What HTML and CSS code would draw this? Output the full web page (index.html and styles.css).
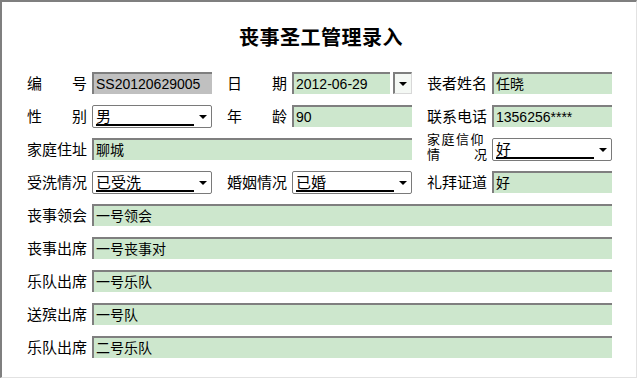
FILE: index.html
```html
<!DOCTYPE html>
<html lang="zh-CN">
<head>
    <meta charset="UTF-8">
    <title>丧事圣工管理录入</title>
    <link rel="stylesheet" href="styles.css">
</head>
<body>

    <div class="window">
        <h1 class="title">丧事圣工管理录入</h1>

        <div class="form">
            <!-- 第一行 -->
            <div class="row">
                <div class="field">
                    <span class="label spread"><i>编</i><i>号</i></span>
                    <div class="box box-gray">SS20120629005</div>
                </div>
                <div class="field">
                    <span class="label spread"><i>日</i><i>期</i></span>
                    <div class="date">
                        <div class="box box-date">2012-06-29</div>
                        <div class="date-btn"><span class="arrow"></span></div>
                    </div>
                </div>
                <div class="field">
                    <span class="label">丧者姓名</span>
                    <div class="box">任晓</div>
                </div>
            </div>

            <!-- 第二行 -->
            <div class="row">
                <div class="field">
                    <span class="label spread"><i>性</i><i>别</i></span>
                    <div class="select"><span class="value">男</span><span class="arrow"></span></div>
                </div>
                <div class="field">
                    <span class="label spread"><i>年</i><i>龄</i></span>
                    <div class="box">90</div>
                </div>
                <div class="field">
                    <span class="label">联系电话</span>
                    <div class="box">1356256****</div>
                </div>
            </div>

            <!-- 第三行 -->
            <div class="row">
                <div class="field">
                    <span class="label">家庭住址</span>
                    <div class="box box-addr">聊城</div>
                </div>
                <div class="field">
                    <span class="label label-two">
                        <span class="line">家庭信仰</span>
                        <span class="line spread"><i>情</i><i>况</i></span>
                    </span>
                    <div class="select"><span class="value">好</span><span class="arrow"></span></div>
                </div>
            </div>

            <!-- 第四行 -->
            <div class="row">
                <div class="field">
                    <span class="label">受洗情况</span>
                    <div class="select"><span class="value">已受洗</span><span class="arrow"></span></div>
                </div>
                <div class="field">
                    <span class="label">婚姻情况</span>
                    <div class="select"><span class="value">已婚</span><span class="arrow"></span></div>
                </div>
                <div class="field">
                    <span class="label">礼拜证道</span>
                    <div class="box">好</div>
                </div>
            </div>

            <!-- 整行字段 -->
            <div class="row">
                <div class="field field-wide">
                    <span class="label">丧事领会</span>
                    <div class="box">一号领会</div>
                </div>
            </div>
            <div class="row">
                <div class="field field-wide">
                    <span class="label">丧事出席</span>
                    <div class="box">一号丧事对</div>
                </div>
            </div>
            <div class="row">
                <div class="field field-wide">
                    <span class="label">乐队出席</span>
                    <div class="box">一号乐队</div>
                </div>
            </div>
            <div class="row">
                <div class="field field-wide">
                    <span class="label">送殡出席</span>
                    <div class="box">一号队</div>
                </div>
            </div>
            <div class="row">
                <div class="field field-wide">
                    <span class="label">乐队出席</span>
                    <div class="box">二号乐队</div>
                </div>
            </div>
        </div>
    </div>

</body>
</html>
```

FILE: styles.css
```css
/* Основные переменные */
:root {
    --box-green: #cde7cd;
    --box-gray: #c0c0c0;
    --edge-dark: #7f7f7f;
    --edge-light: #e2e2e2;
    --text-color: #000000;
}

* {
    margin: 0;
    padding: 0;
    box-sizing: border-box;
}

body {
    background: #ffffff;
    color: var(--text-color);
    font-family: "Liberation Sans", "Noto Sans CJK SC", sans-serif;
}

.window {
    width: 637px;
    height: 378px;
    border-top: 2px solid var(--edge-dark);
    border-left: 2px solid var(--edge-dark);
    border-right: 1px solid var(--edge-light);
    border-bottom: 1px solid var(--edge-light);
    background: #ffffff;
}

.title {
    padding-top: 23px;
    padding-left: 4px;
    font-family: "Noto Sans CJK SC", sans-serif;
    font-size: 20px;
    line-height: 24px;
    font-weight: bold;
    text-align: center;
    letter-spacing: 0.5px;
}

/* Форма */
.form {
    width: 610px;
    margin-top: 23px;
    padding-left: 25px;
    display: flex;
    flex-direction: column;
    gap: 11px;
}

.row {
    display: flex;
    height: 22px;
}

.field {
    display: flex;
    gap: 5px;
    margin-right: 15px;
}

.field-wide {
    flex: 1;
    margin-right: 0;
}

.label {
    width: 60px;
    flex-shrink: 0;
    font-family: "Noto Sans CJK SC", sans-serif;
    font-size: 15px;
    line-height: 22px;
    white-space: nowrap;
}

.spread {
    display: flex;
    justify-content: space-between;
}

.spread i {
    font-style: normal;
}

/* две строки: «家庭信仰 / 情况» */
.label-two {
    display: flex;
    flex-direction: column;
    margin-top: -6px;
    font-family: "Liberation Sans", "Noto Sans CJK SC", sans-serif;
    font-size: 13px;
    letter-spacing: 1.5px;
}

.label-two .line {
    line-height: 15px;
    height: 15px;
}

.label-two .spread {
    letter-spacing: 0;
}

/* Поля */
.box {
    width: 120px;
    height: 22px;
    padding-left: 2px;
    background: var(--box-green);
    border-top: 2px solid var(--edge-dark);
    border-left: 2px solid var(--edge-dark);
    font-size: 14px;
    line-height: 20px;
    white-space: nowrap;
    overflow: hidden;
}

.field-wide .box {
    flex: 1;
}

.box-gray {
    background: var(--box-gray);
}

.box-addr {
    width: 320px;
}

.date {
    display: flex;
    gap: 3px;
}

.box-date {
    width: 98px;
}

.date-btn {
    width: 19px;
    height: 22px;
    border-top: 2px solid var(--edge-dark);
    border-left: 2px solid var(--edge-dark);
    border-right: 1px solid #d8d8d8;
    border-bottom: 1px solid #d8d8d8;
    background: #f4f8f4;
    display: flex;
    align-items: center;
    justify-content: center;
}

/* Выпадающий список */
.select {
    width: 120px;
    height: 23px;
    padding: 0 4px 0 3px;
    border: 1px solid #7a7a7a;
    border-radius: 2px;
    background: #ffffff;
    display: flex;
    align-items: center;
    justify-content: space-between;
}

.select .value {
    width: 98px;
    height: 18px;
    border-bottom: 2px solid #000000;
    font-family: "Noto Sans CJK SC", sans-serif;
    font-size: 15px;
    line-height: 16px;
}

.arrow {
    width: 0;
    height: 0;
    border-left: 4px solid transparent;
    border-right: 4px solid transparent;
    border-top: 4px solid #000000;
}
```
